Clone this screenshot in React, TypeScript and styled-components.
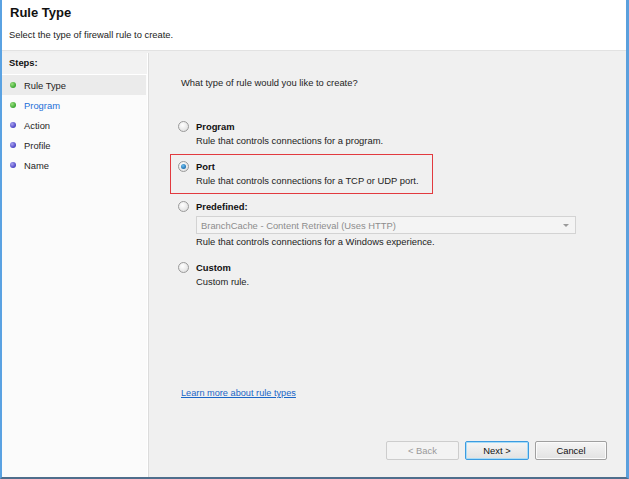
import styled, { createGlobalStyle } from 'styled-components'

const GlobalStyle = createGlobalStyle`
  html, body {
    margin: 0;
    padding: 0;
    background: #ffffff;
  }
  body {
    font-family: "Liberation Sans", Arial, sans-serif;
    font-size: 9.4px;
    color: #1e1e1e;
  }
`

const Window = styled.div`
  box-sizing: border-box;
  width: 629px;
  height: 479px;
  display: flex;
  flex-direction: column;
  border-left: 2px solid #5aa2e2;
  border-right: 3px solid #5ba0dd;
  border-bottom: 2px solid #4f6e8c;
  background: #f0f0f0;
  overflow: hidden;
`

const Header = styled.header`
  background: #ffffff;
  height: 51px;
  border-bottom: 1px solid #e2e2e2;
  padding: 4px 0 0 8px;
  box-sizing: border-box;
`

const Title = styled.h1`
  margin: 0;
  font-size: 13px;
  font-weight: bold;
  line-height: 17px;
  color: #111;
`

const Subtitle = styled.p`
  margin: 8px 0 0 -1px;
  line-height: 12px;
  color: #222;
`

const Body = styled.div`
  flex: 1;
  display: flex;
  min-height: 0;
`

const Sidebar = styled.nav`
  width: 145px;
  margin-top: 2px;
  background: #fbfbfb;
  border-right: 1px solid #ffffff;
  box-shadow: 1px 0 0 #dcdcdc;
  display: flex;
  flex-direction: column;
`

const StepsHeader = styled.div`
  height: 22px;
  line-height: 19px;
  padding-left: 7px;
  background: #f2f2f2;
  border-bottom: 1px solid #ffffff;
  box-sizing: border-box;
  font-weight: bold;
  color: #111;
`

const StepRow = styled.div<{ $active?: boolean }>`
  display: flex;
  align-items: center;
  height: 20px;
  margin-right: 1px;
  padding-left: 8px;
  gap: 8px;
  background: ${(p) => (p.$active ? '#ebebeb' : 'transparent')};
`

const StepLabel = styled.span<{ $link?: boolean }>`
  color: ${(p) => (p.$link ? '#1c6fd8' : '#1e1e1e')};
`

const Dot = styled.span<{ $done?: boolean }>`
  width: 6px;
  height: 6px;
  border-radius: 50%;
  background: ${(p) =>
    p.$done
      ? 'radial-gradient(circle at 35% 35%, #9be07f, #3aa630 70%)'
      : 'radial-gradient(circle at 35% 35%, #a9a2f0, #4b45c4 70%)'};
`

const Main = styled.main`
  flex: 1;
  display: flex;
  flex-direction: column;
  padding: 25px 19px 17px 31px;
  margin-left: 2px;
`

const Question = styled.p`
  margin: 0;
  line-height: 14px;
`

const Options = styled.div`
  margin: 24px 0 0 -11px;
  display: flex;
  flex-direction: column;
  align-items: flex-start;
`

const Option = styled.div<{ $selected?: boolean; $wide?: boolean }>`
  box-sizing: border-box;
  border: 1px solid ${(p) => (p.$selected ? '#e23a3f' : 'transparent')};
  padding: 4px 8px 5px 7px;
  width: ${(p) => (p.$wide ? '100%' : '263px')};
`

const OptionHead = styled.label`
  display: flex;
  align-items: center;
  gap: 7px;
  height: 14px;
  font-weight: bold;
  color: #111;
`

const Radio = styled.span<{ $checked?: boolean }>`
  box-sizing: border-box;
  width: 11px;
  height: 11px;
  border-radius: 50%;
  border: 1px solid #9a9a9a;
  background: radial-gradient(circle at 40% 35%, #ffffff, #e3e3e3 75%);
  display: flex;
  align-items: center;
  justify-content: center;

  &::after {
    content: '';
    display: ${(p) => (p.$checked ? 'block' : 'none')};
    width: 5px;
    height: 5px;
    border-radius: 50%;
    background: radial-gradient(circle at 40% 35%, #6fc0f0, #1566a8 80%);
  }
`

const OptionBody = styled.div`
  margin-left: 18px;
`

const Description = styled.div`
  margin-top: 1px;
  line-height: 14px;
  color: #222;
`

const Select = styled.div`
  box-sizing: border-box;
  margin-top: 3px;
  height: 18px;
  width: 380px;
  border: 1px solid #d3d3d3;
  background: #f4f4f4;
  display: flex;
  align-items: center;
  justify-content: space-between;
  padding: 0 6px 0 4px;
  color: #8d8d8d;
`

const Arrow = styled.span`
  width: 0;
  height: 0;
  border-left: 3px solid transparent;
  border-right: 3px solid transparent;
  border-top: 3px solid #9a9a9a;
`

const LearnLink = styled.a`
  margin-top: auto;
  align-self: flex-start;
  font-size: 9.2px;
  color: #1a66c7;
  text-decoration: underline;
  line-height: 12px;
  margin-bottom: 42px;
`

const ButtonRow = styled.div`
  display: flex;
  justify-content: flex-end;
  gap: 6px;
`

const Button = styled.button<{ $primary?: boolean; $w: number }>`
  box-sizing: border-box;
  width: ${(p) => p.$w}px;
  height: 19px;
  font-family: inherit;
  font-size: 9.4px;
  border-radius: 2px;
  border: 1px solid ${(p) => (p.$primary ? '#3c9be0' : '#a0a0a0')};
  box-shadow: ${(p) => (p.$primary ? 'inset 0 0 0 1px #a8dcf7' : 'inset 0 0 0 1px #fbfbfb')};
  background: linear-gradient(#f5f5f5, #e2e2e2);
  color: #111;
  padding: 0;

  &:disabled {
    border-color: #cdcdcd;
    background: #f3f3f3;
    box-shadow: none;
    color: #9a9a9a;
  }
`

const steps = [
  { label: 'Rule Type', done: true, active: true },
  { label: 'Program', done: true, link: true },
  { label: 'Action' },
  { label: 'Profile' },
  { label: 'Name' },
]

export default function App() {
  return (
    <>
      <GlobalStyle />
      <Window>
        <Header>
          <Title>Rule Type</Title>
          <Subtitle>Select the type of firewall rule to create.</Subtitle>
        </Header>
        <Body>
          <Sidebar>
            <StepsHeader>Steps:</StepsHeader>
            {steps.map((s) => (
              <StepRow key={s.label} $active={s.active}>
                <Dot $done={s.done} />
                <StepLabel $link={s.link}>{s.label}</StepLabel>
              </StepRow>
            ))}
          </Sidebar>
          <Main>
            <Question>What type of rule would you like to create?</Question>
            <Options>
              <Option>
                <OptionHead>
                  <Radio />
                  Program
                </OptionHead>
                <OptionBody>
                  <Description>Rule that controls connections for a program.</Description>
                </OptionBody>
              </Option>
              <Option $selected>
                <OptionHead>
                  <Radio $checked />
                  Port
                </OptionHead>
                <OptionBody>
                  <Description>Rule that controls connections for a TCP or UDP port.</Description>
                </OptionBody>
              </Option>
              <Option $wide>
                <OptionHead>
                  <Radio />
                  Predefined:
                </OptionHead>
                <OptionBody>
                  <Select>
                    <span>BranchCache - Content Retrieval (Uses HTTP)</span>
                    <Arrow />
                  </Select>
                  <Description>Rule that controls connections for a Windows experience.</Description>
                </OptionBody>
              </Option>
              <Option>
                <OptionHead>
                  <Radio />
                  Custom
                </OptionHead>
                <OptionBody>
                  <Description>Custom rule.</Description>
                </OptionBody>
              </Option>
            </Options>
            <LearnLink href="#">Learn more about rule types</LearnLink>
            <ButtonRow>
              <Button $w={73} disabled>&lt; Back</Button>
              <Button $w={64} $primary>Next &gt;</Button>
              <Button $w={72}>Cancel</Button>
            </ButtonRow>
          </Main>
        </Body>
      </Window>
    </>
  )
}
